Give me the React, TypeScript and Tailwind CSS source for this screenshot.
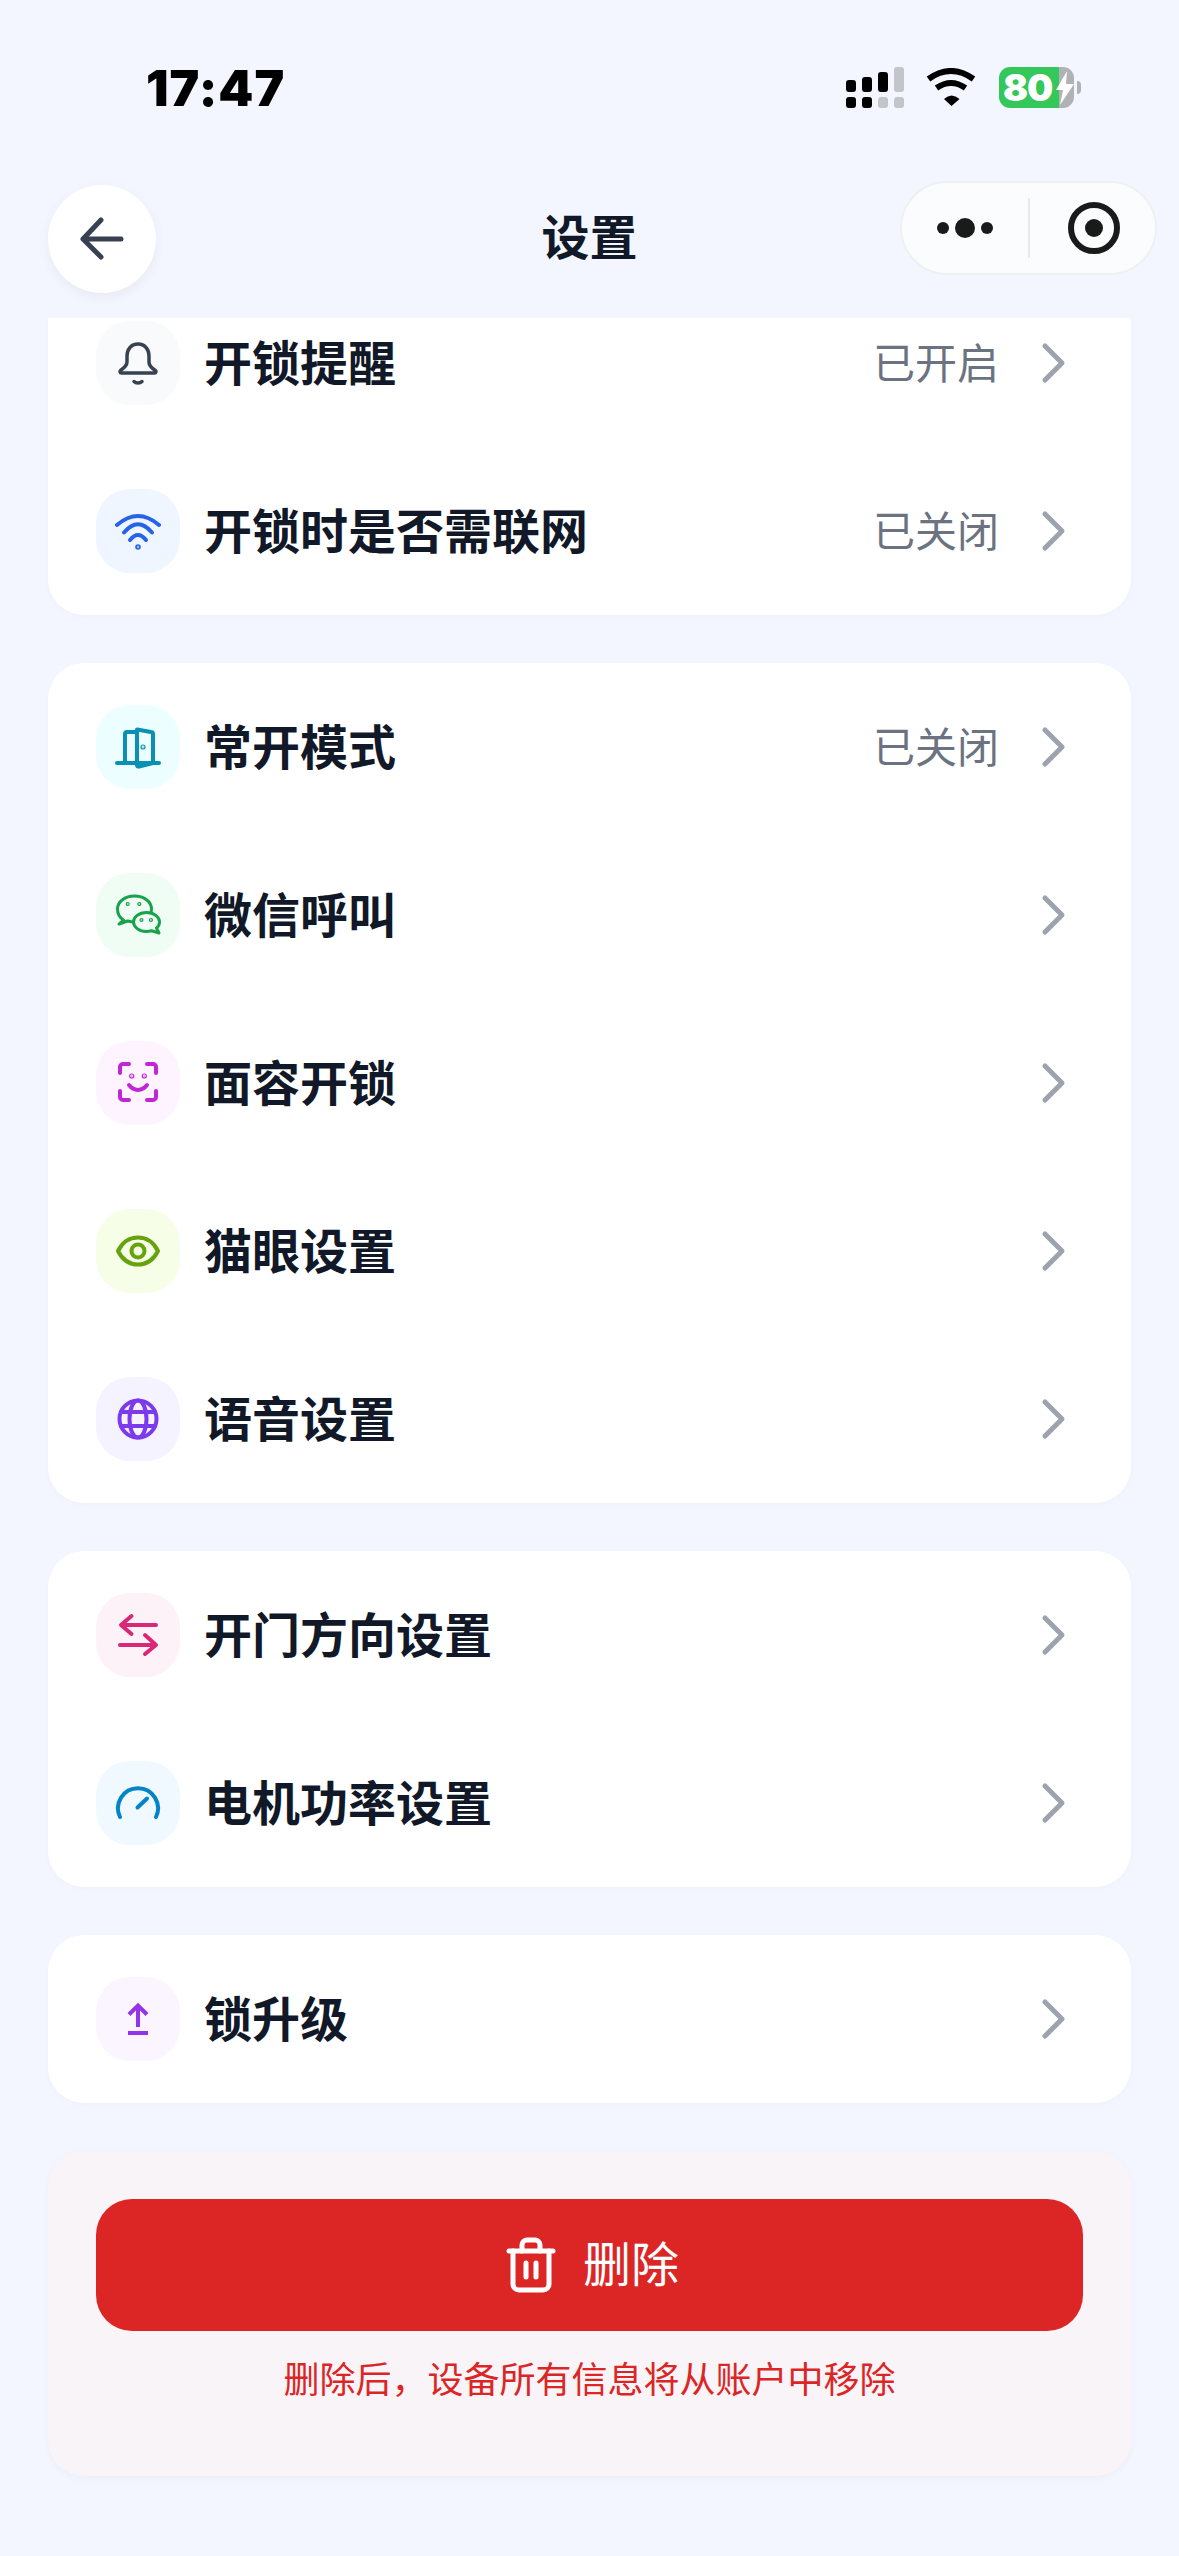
import React from 'react';

type GlyphProps = { children: React.ReactNode; width?: number; fill?: string };

const Glyph = ({ children, width = 4, fill = 'none' }: GlyphProps) => (
  <svg width="48" height="48" viewBox="0 0 48 48" fill={fill} stroke="currentColor" strokeWidth={width} strokeLinecap="round" strokeLinejoin="round">
    {children}
  </svg>
);

const BellIcon = () => (
  <Glyph width={3.5}>
    <path d="M24 5c-7 0-11 5.500-11 12v6c0 3.500-2.500 5.500-6.500 8.500-1 .8-.5 2.500.8 2.500h33.400c1.300 0 1.800-1.700.8-2.500C36.500 28.500 35 26.500 35 23v-6c0-6.500-4-12-11-12z" />
    <path d="M20 42.500c2 2 6 2 8 0" />
  </Glyph>
);

const WifiIcon = () => (
  <Glyph>
    <path d="M3 18Q24 0 45 18" />
    <path d="M10 25.500Q24 9 38 25.500" />
    <path d="M16 33Q24 23 32 33" />
    <circle cx="24" cy="40" r=".8" fill="currentColor" />
  </Glyph>
);

const DoorIcon = () => (
  <Glyph>
    <path d="M3 40H45" />
    <path d="M11 40V11a2 2 0 0 1 2-2h10" />
    <path d="M23 6.500L37 9a2 2 0 0 1 2 2V40L25 43.500a1.500 1.500 0 0 1-2-1.500Z" />
    <circle cx="29" cy="24" r=".6" fill="currentColor" />
  </Glyph>
);

const WechatIcon = () => (
  <Glyph width={3}>
    <path d="M9.500 29C5.500 26.500 3.500 22.500 3.500 18C3.500 10.500 11 5 20.500 5C30 5 37.500 10.500 37.500 18C37.500 25.500 30 31 20.500 31C18 31 15.500 30.500 13.500 30L5 33Z" />
    <path
      d="M32.500 21.500C25 21.500 19.500 26 19.500 31C19.500 36 25 40.500 32.500 40.500C34 40.500 36 40.200 37.500 39.800L45 42L42.500 37C44.500 35.500 45.500 33.500 45.500 31C45.500 26 40 21.500 32.500 21.500Z"
      fill="#f0fdf4"
    />
    <circle cx="13.700" cy="13" r=".6" fill="currentColor" />
    <circle cx="25.300" cy="13" r=".6" fill="currentColor" />
    <circle cx="27.500" cy="29" r=".6" fill="currentColor" />
    <circle cx="37" cy="29" r=".6" fill="currentColor" />
  </Glyph>
);

const FaceIcon = () => (
  <Glyph>
    <path d="M6 14V8a3 3 0 0 1 3-3h6" />
    <path d="M33 5h6a3 3 0 0 1 3 3v6" />
    <path d="M6 32v6a3 3 0 0 0 3 3h6" />
    <path d="M33 41h6a3 3 0 0 0 3-3v-6" />
    <path d="M15 26c5 6.500 13 6.500 18 0" />
    <circle cx="17.700" cy="17" r=".6" fill="currentColor" />
    <circle cx="30.300" cy="17" r=".6" fill="currentColor" />
  </Glyph>
);

const EyeIcon = () => (
  <Glyph>
    <path d="M4 24C8.500 15 16 10.500 24 10.500C32 10.500 39.500 15 44 24C39.500 33 32 37.500 24 37.500C16 37.500 8.500 33 4 24Z" />
    <circle cx="24" cy="24" r="6.500" />
  </Glyph>
);

const GlobeIcon = () => (
  <Glyph>
    <circle cx="24" cy="24" r="18.500" />
    <ellipse cx="24" cy="24" rx="8.500" ry="18.500" />
    <path d="M7 17H41M7 31H41" />
  </Glyph>
);

const SwapIcon = () => (
  <Glyph>
    <path d="M42 14H8M17.500 5L7 14l10.500 9" />
    <path d="M6 34h34M31 24l11 10-11 9" />
  </Glyph>
);

const GaugeIcon = () => (
  <Glyph>
    <path d="M6 38A20 20 0 1 1 42 38" />
    <path d="M23.500 28.500L33 19.500" />
  </Glyph>
);

const UploadIcon = () => (
  <svg width="48" height="48" viewBox="0 0 48 48" fill="none" stroke="currentColor" strokeWidth="4">
    <path d="M14 38h20" />
    <path d="M24 32V11M15 19.500L24 10.500l9 9" />
  </svg>
);

const Chevron = () => (
  <svg width="48" height="48" viewBox="0 0 48 48" fill="none" stroke="#9ca3af" strokeWidth="5" strokeLinecap="round" strokeLinejoin="round" className="shrink-0">
    <path d="M16 7l17 17-17 17" />
  </svg>
);

type RowProps = {
  icon: React.ReactNode;
  tile: string;
  label: string;
  value?: string;
};

const Row = ({ icon, tile, label, value }: RowProps) => (
  <div className="flex h-[168px] items-center pl-[48px] pr-[54px]">
    <div className={`flex h-[84px] w-[84px] shrink-0 items-center justify-center rounded-[34px] ${tile}`}>{icon}</div>
    <span className="ml-[24px] flex-1 pb-[7px] text-[48px] font-bold leading-none text-[#111827]">{label}</span>
    {value && <span className="mr-[30px] pb-[5px] text-[42px] leading-none text-[#6b7280]">{value}</span>}
    <Chevron />
  </div>
);

const Card = ({ children, className = '' }: { children: React.ReactNode; className?: string }) => (
  <div className={`rounded-[36px] bg-white shadow-[0_2px_6px_rgba(0,0,0,0.02)] ${className}`}>{children}</div>
);

const StatusBar = () => (
  <div className="flex h-[41px] items-center justify-between pl-[146px] pr-[98px]">
    <span className="font-['Inter',sans-serif] text-[50px] font-black leading-none tracking-[1px] text-black">17:47</span>
    <div className="flex items-center">
      <svg width="58" height="41" viewBox="0 0 58 41" fill="#000">
        <rect x="0" y="13" width="10" height="12" rx="3" />
        <rect x="16" y="10" width="10" height="15" rx="3" />
        <rect x="32" y="5" width="10" height="20" rx="3" />
        <rect x="48" y="0" width="10" height="25" rx="3" fill="#c4c5c9" />
        <rect x="0" y="30" width="10" height="11" rx="3" />
        <rect x="16" y="30" width="10" height="11" rx="3" />
        <rect x="32" y="30" width="10" height="11" rx="3" fill="#c4c5c9" />
        <rect x="48" y="30" width="10" height="11" rx="3" fill="#c4c5c9" />
      </svg>
      <svg width="52" height="40" viewBox="0 0 52 40" className="ml-[21px]">
        <path d="M3.500 11Q26-5 48.500 11M11.500 20Q26 10 40.500 20" fill="none" stroke="#000" strokeWidth="6" />
        <path d="M19 31Q26.500 24 34.500 31L26.500 38Z" fill="#000" />
      </svg>
      <div className="relative ml-[22px] flex h-[41px] w-[75px] items-center rounded-[11px] bg-[linear-gradient(90deg,#34c759_80%,#b0b2b6_80%)] pl-[4px]">
        <span className="font-['Inter',sans-serif] text-[37px] font-black leading-none tracking-[-1px] text-white">80</span>
        <svg width="18" height="34" viewBox="0 0 18 34" fill="#fff" className="absolute right-[0px] top-[4px]">
          <path d="M11 0L0 19h7l-3 15L18 13h-8z" />
        </svg>
      </div>
      <div className="ml-[3px] h-[13px] w-[4px] rounded-r-full bg-[#b0b2b6]" />
    </div>
  </div>
);

const NavBar = () => (
  <div className="grid grid-cols-[1fr_auto_1fr] items-start px-[22px] pt-[73px]">
    <button className="ml-[26px] mt-[4px] flex h-[108px] w-[108px] items-center justify-center justify-self-start rounded-full bg-white shadow-[0_4px_12px_rgba(0,0,0,0.05)]">
      <svg width="48" height="48" viewBox="0 0 48 48" fill="none" stroke="#374151" strokeWidth="5" strokeLinecap="round" strokeLinejoin="round">
        <path d="M43 24H6M23 5L5 24l18 18" />
      </svg>
    </button>
    <h1 className="mt-[28px] text-[48px] font-bold leading-[50px] text-[#111827]">设置</h1>
    <div className="flex h-[94px] w-[257px] items-center justify-self-end rounded-full border-2 border-[#eef0f4] bg-[#fbfcfe]">
      <div className="flex h-[60px] w-[128px] items-center justify-center gap-[6px] border-r-2 border-[#e6e8ec]">
        <span className="h-[12px] w-[12px] rounded-full bg-[#1a1a1a]" />
        <span className="h-[20px] w-[20px] rounded-full bg-[#1a1a1a]" />
        <span className="h-[12px] w-[12px] rounded-full bg-[#1a1a1a]" />
      </div>
      <div className="flex flex-1 items-center justify-center pl-[3px]">
        <div className="flex h-[52px] w-[52px] items-center justify-center rounded-full border-[6px] border-[#1a1a1a]">
          <span className="h-[18px] w-[18px] rounded-full bg-[#1a1a1a]" />
        </div>
      </div>
    </div>
  </div>
);

export default function App() {
  return (
    <div className="flex h-[2556px] w-[1179px] flex-col overflow-hidden bg-[#f3f6fe] font-['Noto_Sans_CJK_SC','Noto_Sans',sans-serif]">
      <header className="h-[318px] shrink-0 pt-[67px]">
        <StatusBar />
        <NavBar />
      </header>

      <main className="flex min-h-0 flex-1 flex-col gap-[48px] overflow-hidden px-[48px]">
        <Card className="-mt-[39px] shrink-0">
          <Row icon={<BellIcon />} tile="bg-[#f9fafb] text-[#374151]" label="开锁提醒" value="已开启" />
          <Row icon={<WifiIcon />} tile="bg-[#eff6ff] text-[#2563eb]" label="开锁时是否需联网" value="已关闭" />
        </Card>

        <Card className="shrink-0">
          <Row icon={<DoorIcon />} tile="bg-[#ecfeff] text-[#0891b2]" label="常开模式" value="已关闭" />
          <Row icon={<WechatIcon />} tile="bg-[#f0fdf4] text-[#16a34a]" label="微信呼叫" />
          <Row icon={<FaceIcon />} tile="bg-[#fdf4ff] text-[#c026d3]" label="面容开锁" />
          <Row icon={<EyeIcon />} tile="bg-[#f7fee7] text-[#65a30d]" label="猫眼设置" />
          <Row icon={<GlobeIcon />} tile="bg-[#f5f3ff] text-[#7c3aed]" label="语音设置" />
        </Card>

        <Card className="shrink-0">
          <Row icon={<SwapIcon />} tile="bg-[#fdf2f8] text-[#db2777]" label="开门方向设置" />
          <Row icon={<GaugeIcon />} tile="bg-[#f0f9ff] text-[#0284c7]" label="电机功率设置" />
        </Card>

        <Card className="shrink-0">
          <Row icon={<UploadIcon />} tile="bg-[#faf5ff] text-[#9333ea]" label="锁升级" />
        </Card>

        <div className="h-[325px] shrink-0 rounded-[36px] bg-[#f9f4f8] px-[48px] pt-[48px] shadow-[0_3px_8px_rgba(0,0,0,0.03)]">
          <button className="flex h-[132px] w-full items-center justify-center gap-[27px] rounded-[36px] bg-[#dc2626] pl-[6px] text-[48px] leading-none text-white">
            <svg width="50" height="56" viewBox="0 0 50 56" fill="none" stroke="#fff" strokeWidth="5" strokeLinecap="round" strokeLinejoin="round">
              <path d="M3 14h44" />
              <path d="M16 14V8a5 5 0 0 1 5-5h8a5 5 0 0 1 5 5v6" />
              <path d="M7 14v33a6 6 0 0 0 6 6h24a6 6 0 0 0 6-6V14" />
              <path d="M20 26v14M30 26v14" />
            </svg>
            <span className="pb-[8px]">删除</span>
          </button>
          <p className="mt-[26px] text-center text-[36px] leading-[40px] text-[#dc2626]">删除后，设备所有信息将从账户中移除</p>
        </div>
      </main>
    </div>
  );
}
